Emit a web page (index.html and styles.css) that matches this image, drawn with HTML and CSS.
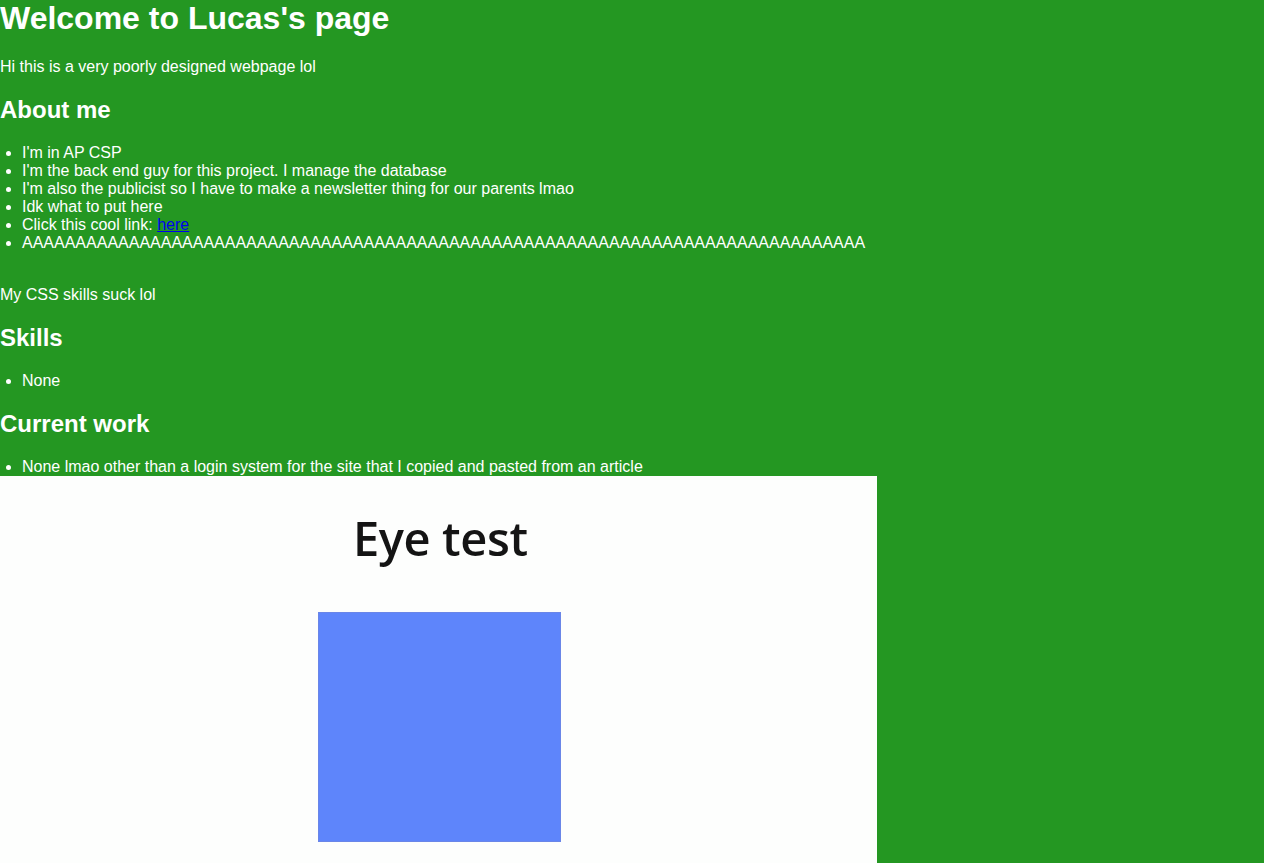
FILE: index.html
```html
<!DOCTYPE html>
<html>
<head>
<meta charset="utf-8">
<title>Lucas's page</title>
<link rel="stylesheet" href="styles.css">
</head>
<body>
<h1 class="title">Welcome to Lucas's page</h1>
<p class="intro">Hi this is a very poorly designed webpage lol</p>
<h2 class="section">About me</h2>
<ul class="list">
  <li>I'm in AP CSP</li>
  <li>I'm the back end guy for this project. I manage the database</li>
  <li>I'm also the publicist so I have to make a newsletter thing for our parents lmao</li>
  <li>Idk what to put here</li>
  <li>Click this cool link: <a class="link" href="#">here</a></li>
  <li>AAAAAAAAAAAAAAAAAAAAAAAAAAAAAAAAAAAAAAAAAAAAAAAAAAAAAAAAAAAAAAAAAAAAAAAAAAAAAAA</li>
</ul>
<div class="note"><br>My CSS skills suck lol</div>
<h2 class="section">Skills</h2>
<ul class="list">
  <li>None</li>
</ul>
<h2 class="section">Current work</h2>
<ul class="list list-last">
  <li>None lmao other than a login system for the site that I copied and pasted from an article</li>
</ul>
<div class="eye-test">
  <div class="eye-title">Eye test</div>
  <div class="eye-square"></div>
</div>
</body>
</html>
```
FILE: styles.css
```css
html, body {
  margin: 0;
  padding: 0;
}
body {
  background: #249722;
  color: #ffffff;
  font-family: "Liberation Sans", Arial, sans-serif;
  font-size: 16px;
  line-height: normal;
}
.title {
  font-size: 32px;
  font-weight: bold;
  margin: 0 0 21px 0;
}
.intro {
  margin: 16px 0;
}
.section {
  font-size: 24px;
  font-weight: bold;
  margin: 20px 0;
}
.list {
  margin: 16px 0;
  padding-left: 22px;
}
.list-last {
  margin-bottom: 0;
}
.link {
  color: #0000ee;
  text-decoration: underline;
}
.note {
  margin: 0;
}
.eye-test {
  width: 877px;
  height: 400px;
  background: #fdfefd;
  position: relative;
  overflow: hidden;
}
.eye-title {
  position: absolute;
  left: 353px;
  top: 30px;
  font-family: "Open Sans", "Noto Sans", sans-serif;
  font-weight: 600;
  font-size: 47px;
  color: #141414;
  letter-spacing: -0.4px;
  filter: blur(0.5px);
}
.eye-square {
  position: absolute;
  left: 318px;
  top: 136px;
  width: 243px;
  height: 230px;
  background: #5e85fb;
  box-shadow: inset 0 0 0 1px #6a86e8;
  filter: blur(0.4px);
}
```
